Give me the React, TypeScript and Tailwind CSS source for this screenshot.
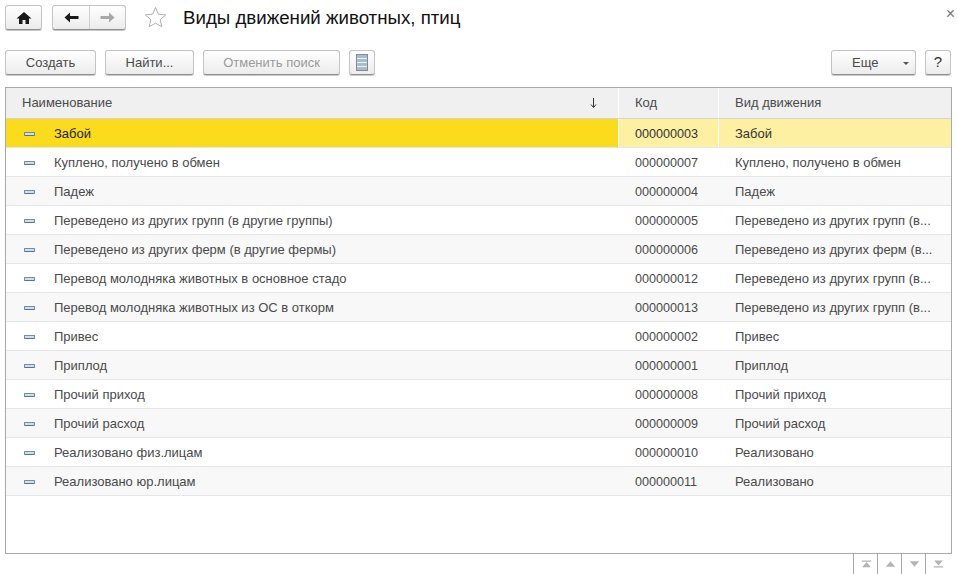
const rows = [
  ["Забой", "000000003", "Забой"],
  ["Куплено, получено в обмен", "000000007", "Куплено, получено в обмен"],
  ["Падеж", "000000004", "Падеж"],
  ["Переведено из других групп (в другие группы)", "000000005", "Переведено из других групп (в..."],
  ["Переведено из других ферм (в другие фермы)", "000000006", "Переведено из других ферм (в..."],
  ["Перевод молодняка животных в основное стадо", "000000012", "Переведено из других групп (в..."],
  ["Перевод молодняка животных из ОС в откорм", "000000013", "Переведено из других групп (в..."],
  ["Привес", "000000002", "Привес"],
  ["Приплод", "000000001", "Приплод"],
  ["Прочий приход", "000000008", "Прочий приход"],
  ["Прочий расход", "000000009", "Прочий расход"],
  ["Реализовано физ.лицам", "000000010", "Реализовано"],
  ["Реализовано юр.лицам", "000000011", "Реализовано"],
];

function Btn({ w, disabled, children }: { w: string; disabled?: boolean; children: React.ReactNode }) {
  return (
    <div
      className={`${w} h-[25px] shrink-0 flex items-center justify-center rounded-[3px] border border-[#c4c4c4] border-b-[#8f8f8f] bg-gradient-to-b from-white to-[#ececec] shadow-[0_1px_0_#c8c8c8] ${
        disabled ? "text-[#9a9a9a]" : "text-[#4a4a4a]"
      }`}
    >
      {children}
    </div>
  );
}

function Dash() {
  return <div className="w-[11px] h-[4px] rounded-[1px] border border-[#6f8ea8] border-b-[#4f7696] bg-[#d5dde2]" />;
}

function Pager({ d }: { d: string }) {
  return (
    <div className="w-[24px] h-[20px] border-l border-[#a8a8a8] flex items-center justify-center">
      <svg className="ml-[1px]" width="11" height="8" viewBox="0 0 14 10" fill="#b4b4b4">
        <path d={d} />
      </svg>
    </div>
  );
}

export default function App() {
  return (
    <div className="w-[958px] h-[574px] overflow-hidden bg-white flex flex-col text-[13px] font-['Liberation_Sans',Arial,sans-serif]">
      {/* шапка */}
      <div className="h-[25px] mt-[5px] pl-[5px] pr-[3px] flex items-center">
        <Btn w="w-[37px]">
          <svg width="16" height="14" viewBox="0 0 16 14" fill="#1a1a1a">
            <path d="M8 1 L0.5 7.5 L3 7.5 L3 13 L6.5 13 L6.5 9 L9.5 9 L9.5 13 L13 13 L13 7.5 L15.5 7.5 Z" />
          </svg>
        </Btn>
        <div className="w-[74px] h-[25px] ml-[10px] flex rounded-[3px] border border-[#c4c4c4] border-b-[#8f8f8f] bg-gradient-to-b from-white to-[#ececec] shadow-[0_1px_0_#c8c8c8]">
          <div className="w-[37px] flex items-center justify-center border-r border-[#cfcfcf]">
            <svg width="15" height="11" viewBox="0 0 15 11" fill="#1a1a1a">
              <path d="M0.5 5.5 L6 0.5 L6 4 L14.5 4 L14.5 7 L6 7 L6 10.5 Z" />
            </svg>
          </div>
          <div className="flex-1 flex items-center justify-center">
            <svg width="15" height="11" viewBox="0 0 15 11" fill="#a8a8a8">
              <path d="M14.5 5.5 L9 0.5 L9 4 L0.5 4 L0.5 7 L9 7 L9 10.5 Z" />
            </svg>
          </div>
        </div>
        <svg className="ml-[18px] -mt-[1px]" width="23" height="22" viewBox="0 0 23 22" fill="none" stroke="#b0b0b0">
          <path d="M11.5 1.5 L14.4 8.2 L21.7 8.9 L16.2 13.7 L17.8 20.8 L11.5 17.1 L5.2 20.8 L6.8 13.7 L1.3 8.9 L8.6 8.2 Z" />
        </svg>
        <div className="ml-[16px] mt-[2px] text-[18.7px] text-[#111]">Виды движений животных, птиц</div>
        <div className="ml-auto -mt-[8px] text-[16px] leading-none text-[#777]">×</div>
      </div>

      {/* командная панель */}
      <div className="h-[25px] mt-[20px] pl-[5px] flex items-center">
        <Btn w="w-[91px]">Создать</Btn>
        <div className="ml-[9px]">
          <Btn w="w-[89px]">Найти...</Btn>
        </div>
        <div className="ml-[9px]">
          <Btn w="w-[137px]" disabled>
            Отменить поиск
          </Btn>
        </div>
        <div className="ml-[9px]">
          <Btn w="w-[26px]">
            <svg width="12" height="17" viewBox="0 0 12 17">
              <rect x="0.5" y="0.5" width="11" height="16" fill="#a9bccb" stroke="#7c8c99" />
              <path d="M1 4.5H11M1 8.5H11M1 12.5H11" stroke="#eef2f5" />
            </svg>
          </Btn>
        </div>
        <div className="ml-auto">
          <Btn w="w-[85px]">
            <div className="w-full flex items-center justify-between pl-[20px] pr-[6px]">
              <span>Еще</span>
              <svg className="mt-[2px]" width="6" height="3" viewBox="0 0 6 3" fill="#555">
                <path d="M0 0H6L3 3Z" />
              </svg>
            </div>
          </Btn>
        </div>
        <div className="ml-[9px] mr-[7px]">
          <Btn w="w-[26px]">
            <span className="text-[15px] text-[#333]">?</span>
          </Btn>
        </div>
      </div>

      {/* таблица */}
      <div className="mt-[12px] ml-[5px] mr-[6px] h-[467px] shrink-0 border border-[#a8a8a8] flex flex-col text-[#4a4a4a]">
        <div className="h-[31px] shrink-0 flex bg-[#f0f0f0] border-b border-[#d4d4d4]">
          <div className="w-[613px] pl-[16px] pr-[21px] flex items-center justify-between border-r border-white">
            <span>Наименование</span>
            <svg width="7" height="10" viewBox="0 0 7 10" fill="none" stroke="#333">
              <path d="M3.5 0V9M1 6.5L3.5 9.5L6 6.5" />
            </svg>
          </div>
          <div className="w-[100px] pl-[16px] flex items-center border-r border-white">Код</div>
          <div className="flex-1 pl-[16px] flex items-center">Вид движения</div>
        </div>
        {rows.map((r, i) => {
          const active = i === 0;
          return (
            <div
              key={r[1]}
              className={`h-[29px] shrink-0 flex items-center border-b border-[#e6e6e6] ${
                active ? "bg-[#fdf0a3] text-[#333]" : i % 2 === 1 ? "bg-white" : "bg-[#f8f8f8]"
              }`}
            >
              <div
                className={`w-[613px] h-full flex items-center pl-[18px] pt-[2px] border-r ${
                  active ? "bg-[#fadc1c] border-white text-[#222]" : "border-transparent"
                }`}
              >
                <Dash />
                <span className="ml-[19px] whitespace-nowrap">{r[0]}</span>
              </div>
              <div className={`w-[100px] h-full flex items-center pl-[16px] pt-[2px] text-[12.6px] border-r ${active ? "border-white" : "border-transparent"}`}>
                {r[1]}
              </div>
              <div className="flex-1 pl-[16px] pt-[2px] whitespace-nowrap">{r[2]}</div>
            </div>
          );
        })}
      </div>

      {/* прокрутка */}
      <div className="h-[20px] shrink-0 flex justify-end pr-[9px]">
        <Pager d="M1 0.5H13V2H1Z M7 2.5L12.5 9H1.5Z" />
        <Pager d="M7 1.5L13 8.5H1Z" />
        <Pager d="M1 1.5H13L7 8.5Z" />
        <Pager d="M1.5 0.5H12.5L7 7Z M1 8H13V9.5H1Z" />
      </div>
    </div>
  );
}
